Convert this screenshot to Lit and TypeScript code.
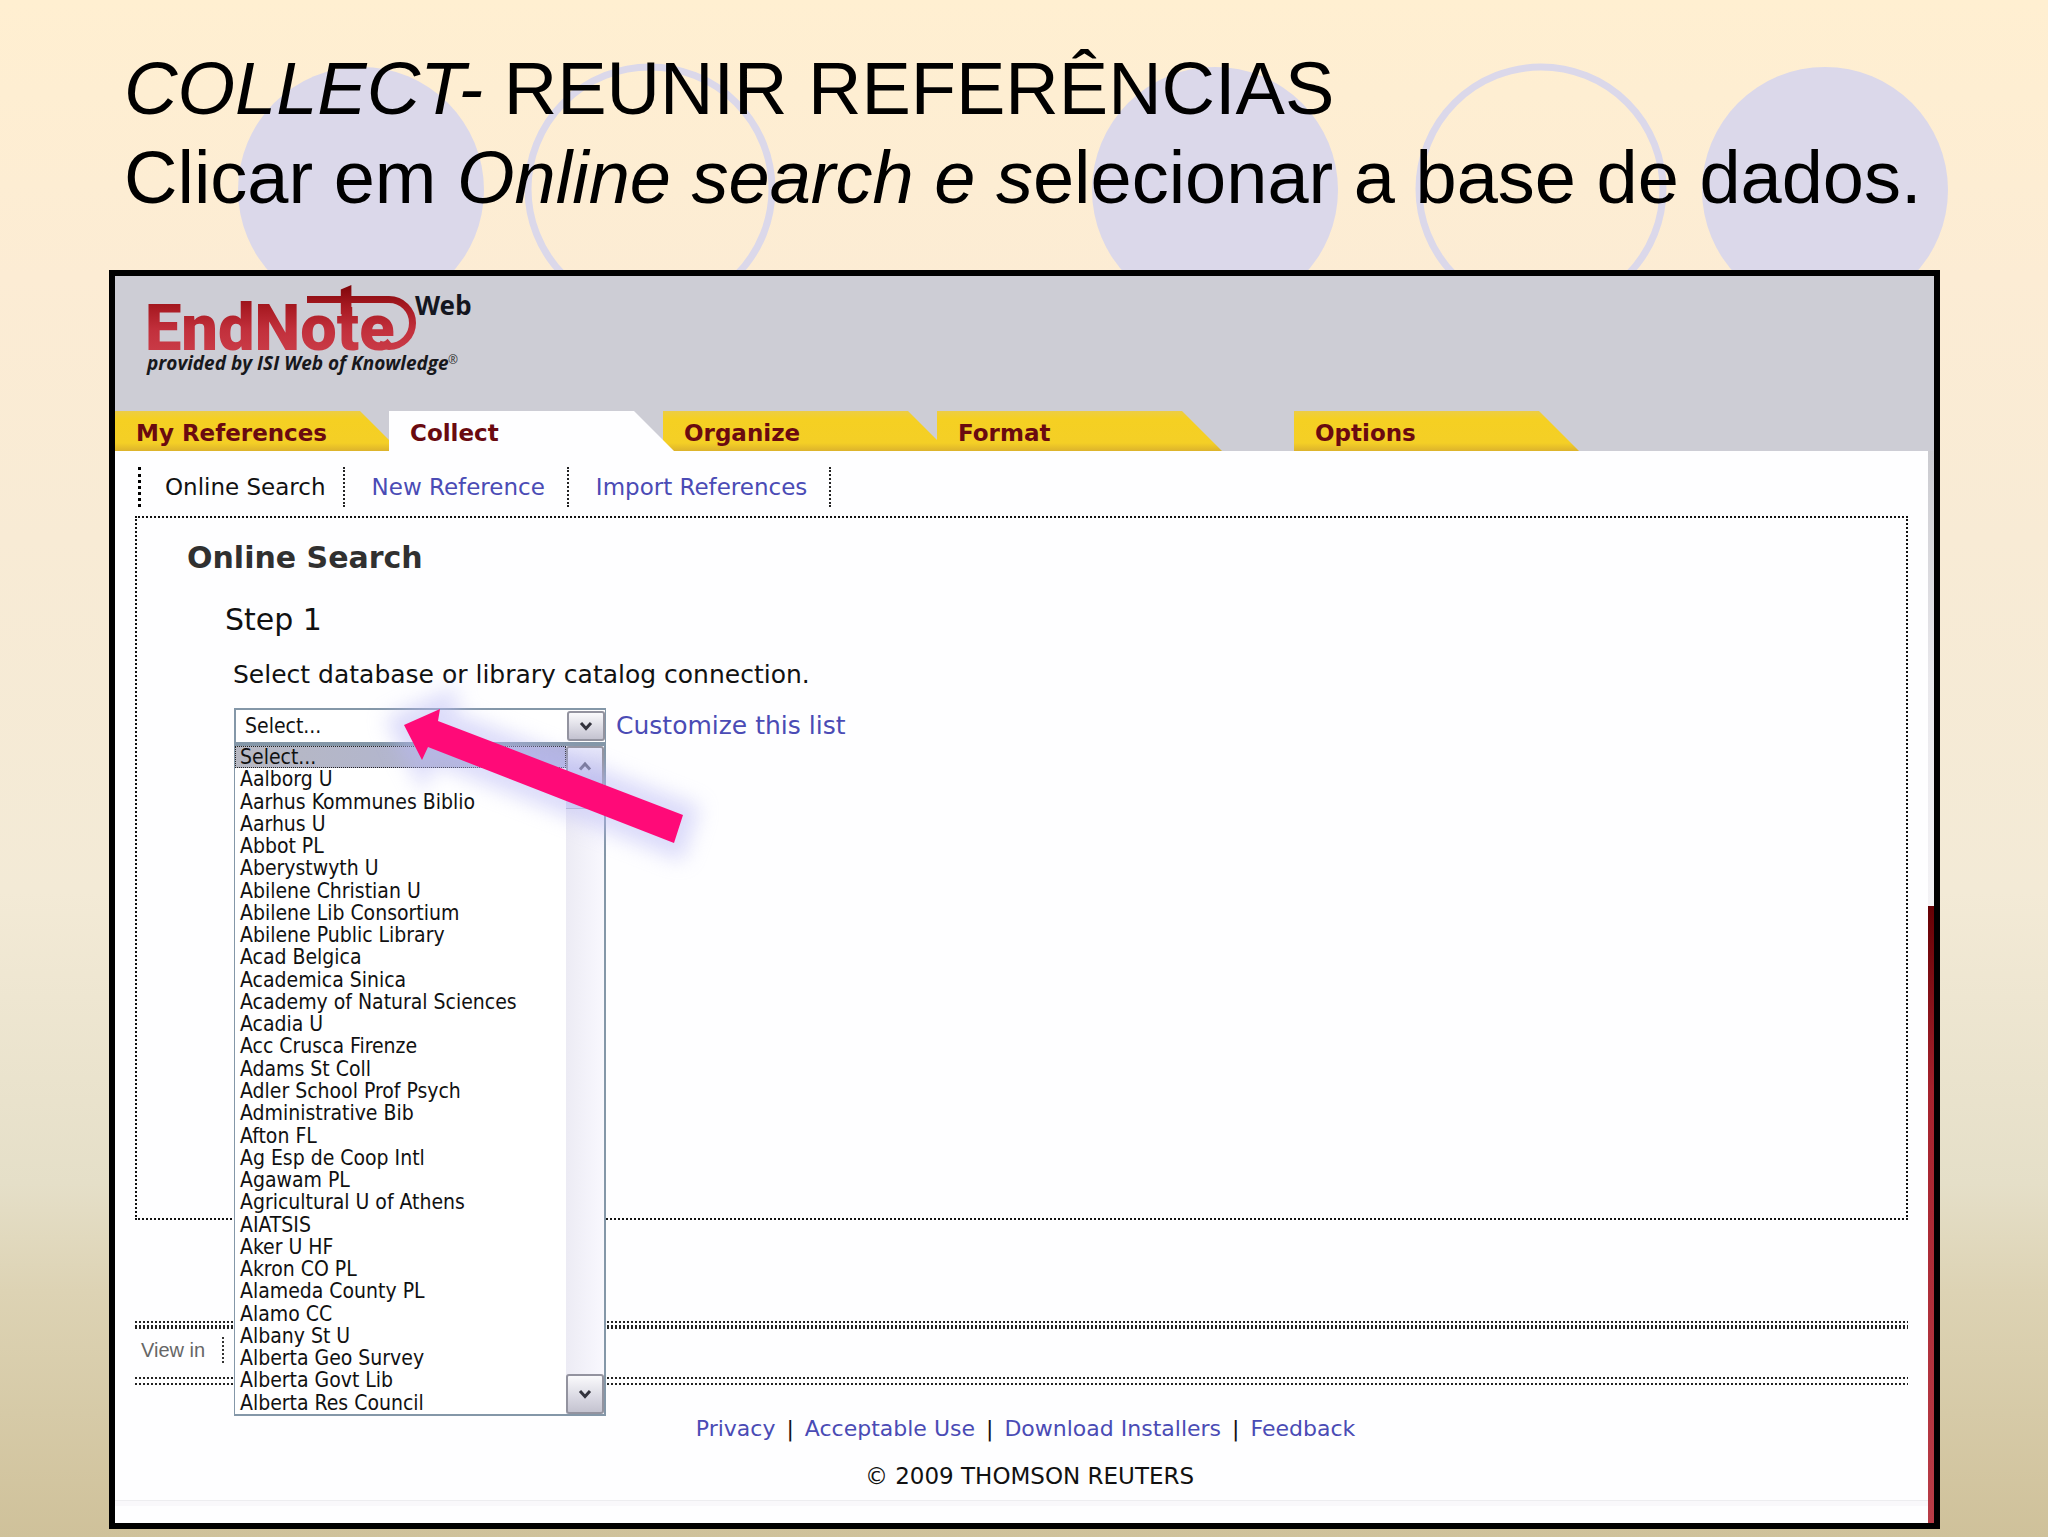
import { LitElement, html, css, svg } from "lit";
import { customElement, state } from "lit/decorators.js";
import { classMap } from "lit/directives/class-map.js";

const TABS = ["My References", "Collect", "Organize", "Format", "Options"];
const SUBNAV = ["Online Search", "New Reference", "Import References"];
const FOOTER_LINKS = ["Privacy", "Acceptable Use", "Download Installers", "Feedback"];
const DATABASES = [
  "Select...",
  "Aalborg U",
  "Aarhus Kommunes Biblio",
  "Aarhus U",
  "Abbot PL",
  "Aberystwyth U",
  "Abilene Christian U",
  "Abilene Lib Consortium",
  "Abilene Public Library",
  "Acad Belgica",
  "Academica Sinica",
  "Academy of Natural Sciences",
  "Acadia U",
  "Acc Crusca Firenze",
  "Adams St Coll",
  "Adler School Prof Psych",
  "Administrative Bib",
  "Afton FL",
  "Ag Esp de Coop Intl",
  "Agawam PL",
  "Agricultural U of Athens",
  "AIATSIS",
  "Aker U HF",
  "Akron CO PL",
  "Alameda County PL",
  "Alamo CC",
  "Albany St U",
  "Alberta Geo Survey",
  "Alberta Govt Lib",
  "Alberta Res Council",
];

const chevron = (up: boolean) => html`
  <svg class="chevron" viewBox="0 0 14 12" width="14" height="12" aria-hidden="true">
    ${up
      ? svg`<path d="M2 9.500 7 4l5 5.500" />`
      : svg`<path d="M2 3l5 5.500L12 3" />`}
  </svg>
`;

/* EndNote Web wordmark with the bar and loop that cross its last letters. */
@customElement("endnote-logo")
export class EndnoteLogo extends LitElement {
  static styles = css`
    :host {
      display: block;
    }
    .mark {
      display: block;
    }
    .name {
      font: 900 65px Roboto, sans-serif;
    }
    .web {
      font: 700 26px "Noto Sans", sans-serif;
      fill: #14161f;
    }
    .by {
      font: italic 700 19px "Open Sans", sans-serif;
      fill: #17181c;
    }
    .reg {
      font: 400 12px "Open Sans", sans-serif;
      fill: #333;
    }
  `;

  render() {
    return html`
      <svg class="mark" width="340" height="100" viewBox="0 0 340 100" role="img" aria-label="EndNote Web">
        <defs>
          <linearGradient id="red" gradientUnits="userSpaceOnUse" x1="0" y1="6" x2="0" y2="72">
            <stop offset="0" stop-color="#7d0509" />
            <stop offset="0.350" stop-color="#a81a22" />
            <stop offset="0.700" stop-color="#c2303c" />
            <stop offset="1" stop-color="#c93a46" />
          </linearGradient>
        </defs>
        <text class="name" x="0" y="72" fill="url(#red)">EndNote</text>
        <path d="M195.800 11.500 206.400 7V36H195.800Z" fill="url(#red)" />
        <path
          d="M162 21.500H244A23.500 23.500 0 0 1 244 68.500Q239 68.500 234 66"
          fill="none"
          stroke="url(#red)"
          stroke-width="7"
        />
        <text class="web" x="270" y="37">Web</text>
        <text class="by" x="2" y="92">provided by ISI Web of Knowledge</text>
        <text class="reg" x="303" y="86">®</text>
      </svg>
    `;
  }
}

/* Drop-down field whose option list is shown open below it. */
@customElement("database-picker")
export class DatabasePicker extends LitElement {
  @state() private selected = 0;

  static styles = css`
    :host {
      display: block;
      position: relative;
      width: 372px;
      font: 21px/23px "DejaVu Sans Condensed", "DejaVu Sans", sans-serif;
      color: #111;
    }
    .field {
      display: flex;
      align-items: center;
      box-sizing: border-box;
      height: 36px;
      border: 2px solid #8497a8;
      border-right-width: 1px;
      background: #fff;
    }
    .select {
      flex: 1;
      min-width: 0;
      height: 30px;
      padding: 0 0 0 9px;
      border: 0;
      background: transparent;
      appearance: none;
      font: inherit;
      color: inherit;
      outline: none;
    }
    .arrow {
      display: flex;
      align-items: center;
      justify-content: center;
      box-sizing: border-box;
      width: 38px;
      height: 40px;
      padding: 0;
      border: 2px solid #93939f;
      border-radius: 3px;
      background: linear-gradient(#fafafc, #d9d8e2 60%, #c4c3d0);
    }
    .field .arrow {
      height: 30px;
    }
    .chevron path {
      fill: none;
      stroke: #33333d;
      stroke-width: 3;
    }
    .up .chevron path {
      stroke: #62627c;
    }
    .up {
      background: linear-gradient(#e6e6fa, #c9c9ea);
    }
    .popup {
      position: absolute;
      z-index: 2;
      top: 100%;
      left: 0;
      right: 0;
      display: flex;
      box-sizing: border-box;
      height: 672px;
      border: 2px solid #8497a8;
      border-left-width: 1px;
      background: #fff;
    }
    .list {
      flex: 1;
      display: grid;
      grid-template-rows: repeat(30, minmax(0, 1fr));
      margin: 0;
      padding: 0;
      list-style: none;
    }
    .option {
      padding-left: 5px;
      white-space: nowrap;
      cursor: default;
    }
    .option.selected {
      outline: 1px dotted #222;
      outline-offset: -1px;
      background: linear-gradient(90deg, #b7b8c2, #b3b6cb 40%, #b2b3dc);
    }
    .bar {
      display: flex;
      flex-direction: column;
      background: linear-gradient(90deg, #ecebf4, #f9f8fe);
    }
    .thumb {
      flex: 0 0 22px;
      border-bottom: 1px solid #b5b4cc;
      background: linear-gradient(90deg, #dcdcf4, #cfcff0);
    }
    .track {
      flex: 1;
    }
  `;

  render() {
    return html`
      <div class="field">
        <select
          class="select"
          aria-label="Database or library catalog"
          .selectedIndex=${this.selected}
          @change=${(e: Event) => (this.selected = (e.target as HTMLSelectElement).selectedIndex)}
        >
          ${DATABASES.map((name) => html`<option>${name}</option>`)}
        </select>
        <button class="arrow" type="button" aria-label="Toggle list">${chevron(false)}</button>
      </div>
      <div class="popup">
        <ul class="list" role="listbox" aria-label="Databases">
          ${DATABASES.map(
            (name, i) => html`
              <li
                class=${classMap({ option: true, selected: i === this.selected })}
                role="option"
                aria-selected=${i === this.selected}
                @click=${() => (this.selected = i)}
              >${name}</li>
            `
          )}
        </ul>
        <div class="bar">
          <button class="arrow up" type="button" aria-label="Scroll up">${chevron(true)}</button>
          <div class="thumb"></div>
          <div class="track"></div>
          <button class="arrow" type="button" aria-label="Scroll down">${chevron(false)}</button>
        </div>
      </div>
    `;
  }
}

@customElement("app-root")
export class AppRoot extends LitElement {
  static styles = css`
    :host {
      display: flex;
      flex-direction: column;
      position: relative;
      box-sizing: border-box;
      min-height: 100vh;
      padding-bottom: 8px;
      background: linear-gradient(
        #ffefd1 0%,
        #fcecd4 18%,
        #f8ebd5 35%,
        #f3ead6 58%,
        #e5dfc8 77%,
        #ddd3b4 84%,
        #cfc19a 100%
      );
      font-family: "DejaVu Sans", Verdana, sans-serif;
      color: #111;
    }
    a {
      color: #4a4bb5;
      text-decoration: none;
    }
    .circles {
      position: absolute;
      top: 0;
      left: 0;
      width: 100%;
    }
    .title {
      position: relative;
      margin: 0;
      padding: 44px 40px 48px 124px;
      font: 74px/89px "Liberation Sans", Arial, sans-serif;
      color: #000;
    }
    .frame {
      position: relative;
      flex: 1;
      display: flex;
      flex-direction: column;
      margin: 0 108px 0 109px;
      border: 6px solid #000;
      background: #fefeff;
    }
    .header {
      display: flex;
      flex-direction: column;
      justify-content: space-between;
      height: 175px;
      background: #cdcdd5;
    }
    .logo {
      padding: 2px 0 0 30px;
    }
    .tabs {
      display: flex;
    }
    .tab {
      position: relative;
      box-sizing: border-box;
      width: 285px;
      height: 40px;
      margin-right: -11px;
      padding: 5px 0 0 21px;
      background: linear-gradient(#eccd45, #f5d022 20%, #f4cf26 80%, #dcb32c);
      clip-path: polygon(0 0, calc(100% - 40px) 0, 100% 100%, 0 100%);
      font-size: 23px;
      line-height: 34px;
      font-weight: 700;
      color: #6a0a10;
    }
    .tab.active {
      z-index: 1;
      background: #fefeff;
    }
    .tab:last-child {
      margin-left: 83px;
    }
    .body {
      flex: 1;
      display: flex;
    }
    .pane {
      flex: 1;
      display: flex;
      flex-direction: column;
    }
    .rail {
      display: flex;
      flex-direction: column;
      width: 6px;
    }
    .rail-top {
      flex: 454;
      background: linear-gradient(#cbcbd0, #e9e8ec 50%, #f3f2f5);
    }
    .rail-bottom {
      flex: 616;
      background: linear-gradient(#650004, #a5222d 30%, #b83c47);
    }
    .subnav {
      display: flex;
      padding: 16px 0 9px 23px;
      font-size: 23px;
      line-height: 40px;
    }
    .subnav a {
      padding: 0 22px 0 27px;
      border-right: 2px dotted #222;
    }
    .subnav a:first-child {
      padding: 0 17px 0 24px;
      border-left: 3px dotted #000;
      color: #111;
    }
    .panel {
      flex: 1;
      margin: 0 20px;
      padding: 20px 48px 0 50px;
      border: 2px dotted #111;
    }
    .heading {
      margin: 0;
      font-size: 30px;
      line-height: 40px;
      color: #303030;
    }
    .step {
      margin: 22px 0 0 38px;
      font-size: 30px;
      font-weight: 400;
      line-height: 40px;
    }
    .hint {
      margin: 19px 0 0 46px;
      font-size: 25px;
      line-height: 32px;
    }
    .picker {
      position: relative;
      display: flex;
      align-items: center;
      gap: 10px;
      margin: 17px 0 0 47px;
      font-size: 25px;
      line-height: 36px;
    }
    .pointer {
      position: absolute;
      z-index: 3;
      top: -50px;
      left: 110px;
      pointer-events: none;
    }
    .rule {
      height: 2px;
      margin: 0 20px;
      background: repeating-linear-gradient(90deg, #222 0 2px, transparent 2px 4px);
    }
    .rule.first {
      margin-top: 101px;
      margin-bottom: 2px;
    }
    .rule.thick {
      height: 4px;
    }
    .rule.upper {
      margin-bottom: 4px;
    }
    .view {
      display: flex;
      padding: 8px 26px 14px;
      font: 20px/26px "Liberation Sans", Arial, sans-serif;
      color: #666;
    }
    .view span {
      padding-right: 17px;
      border-right: 2px dotted #333;
    }
    .links {
      display: flex;
      justify-content: center;
      gap: 11px;
      margin-top: 28px;
      padding-left: 8px;
      font-size: 22px;
      line-height: 32px;
    }
    .copyright {
      margin: 15px 0 8px;
      padding-left: 16px;
      font-size: 23px;
      line-height: 32px;
      text-align: center;
    }
    .band {
      height: 6px;
      margin-bottom: 17px;
      border-top: 1px solid #ededf0;
      box-sizing: border-box;
      background: #f9f8fb;
    }
  `;

  render() {
    return html`
      <svg class="circles" viewBox="0 0 2048 320" aria-hidden="true">
        <g fill="#dbd8ea">
          <circle cx="361" cy="190" r="123" />
          <circle cx="1215" cy="190" r="123" />
          <circle cx="1825" cy="190" r="123" />
        </g>
        <g fill="none" stroke="#dbd8ea" stroke-width="7">
          <circle cx="650" cy="189" r="122" />
          <circle cx="1541" cy="189" r="122" />
        </g>
      </svg>

      <h1 class="title">
        <i>COLLECT-</i> REUNIR REFERÊNCIAS<br />Clicar em <i>Online search e s</i>elecionar a base de dados.
      </h1>

      <main class="frame">
        <header class="header">
          <endnote-logo class="logo"></endnote-logo>
          <nav class="tabs" aria-label="Sections">
            ${TABS.map(
              (name) => html`<a href="#" class=${classMap({ tab: true, active: name === "Collect" })}>${name}</a>`
            )}
          </nav>
        </header>

        <div class="body">
          <div class="pane">
            <nav class="subnav" aria-label="Collect">
              ${SUBNAV.map((name) => html`<a href="#">${name}</a>`)}
            </nav>

            <section class="panel">
              <h2 class="heading">Online Search</h2>
              <h3 class="step">Step 1</h3>
              <p class="hint">Select database or library catalog connection.</p>
              <div class="picker">
                <database-picker></database-picker>
                <a href="#">Customize this list</a>
                <svg class="pointer" width="380" height="240" viewBox="0 0 380 240" aria-hidden="true">
                  <defs>
                    <filter id="glow" x="-20%" y="-30%" width="140%" height="160%">
                      <feGaussianBlur stdDeviation="10" />
                    </filter>
                  </defs>
                  <path
                    class="halo"
                    d="M60 67 96 51 94 63 339 157 330 185 84 89 78 102Z"
                    fill="#b9b9f5"
                    stroke="#b9b9f5"
                    stroke-width="28"
                    opacity="0.500"
                    filter="url(#glow)"
                  />
                  <path d="M60 67 96 51 94 63 339 157 330 185 84 89 78 102Z" fill="#ff0a78" />
                </svg>
              </div>
            </section>

            <footer>
              <div class="rule first"></div>
              <div class="rule thick"></div>
              <div class="view"><span>View in</span></div>
              <div class="rule upper"></div>
              <div class="rule"></div>
              <nav class="links" aria-label="Footer">
                ${FOOTER_LINKS.map(
                  (name, i) => html`${i ? html`<span>|</span>` : null}<a href="#">${name}</a>`
                )}
              </nav>
              <p class="copyright">© 2009 THOMSON REUTERS</p>
              <div class="band"></div>
            </footer>
          </div>
          <div class="rail">
            <div class="rail-top"></div>
            <div class="rail-bottom"></div>
          </div>
        </div>
      </main>
    `;
  }
}
